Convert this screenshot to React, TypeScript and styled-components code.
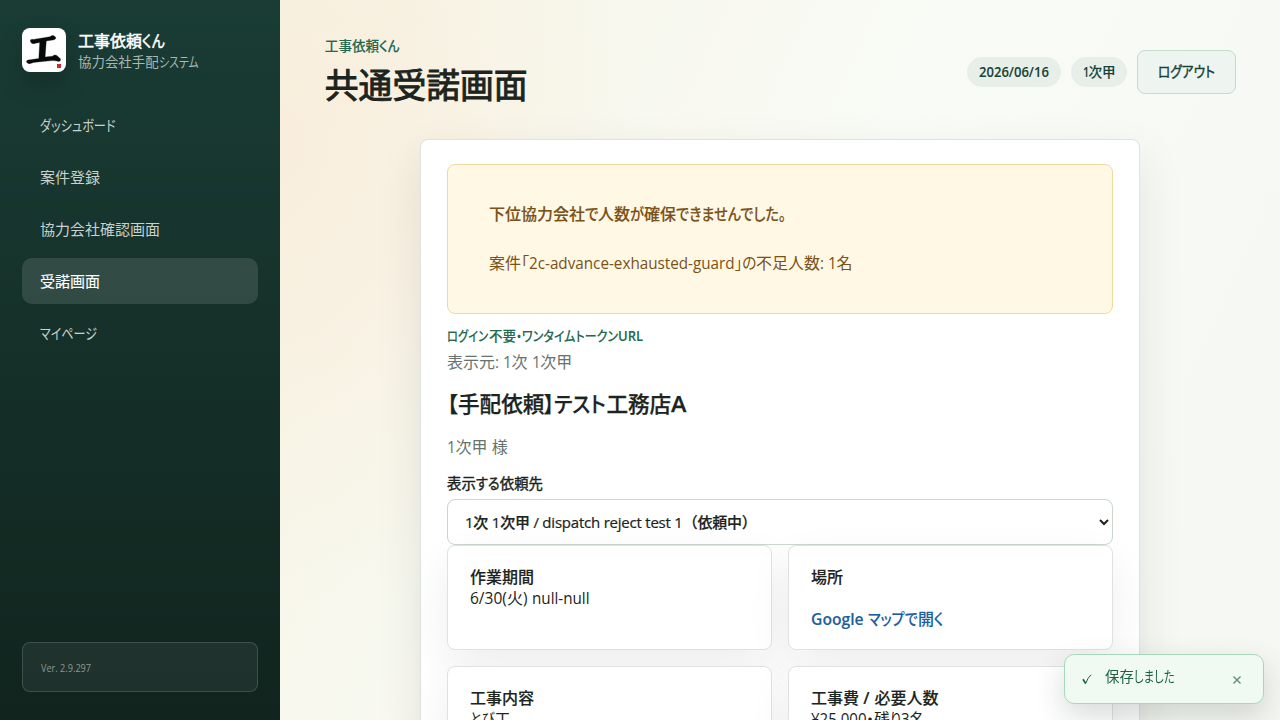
import React from 'react';
import styled, { createGlobalStyle } from 'styled-components';

const GlobalStyle = createGlobalStyle`
  * { box-sizing: border-box; }
  body {
    margin: 0;
    overflow: hidden;
    color: #1c2420;
    font-family: "Open Sans", "Noto Sans CJK JP", sans-serif;
    font-feature-settings: "palt";
  }
`;

/* A run of text set narrower than its natural width. */
const Narrow = styled.span<{ $w: number; $s: number; $semi?: boolean }>`
  display: inline-block;
  width: ${p => p.$w}px;
  white-space: pre;
  font-weight: ${p => (p.$semi ? 600 : 'inherit')};
  transform: scaleX(${p => p.$s});
  transform-origin: left;
`;

const N = ({ w, s, semi, children }: { w: number; s: number; semi?: boolean; children: React.ReactNode }) => (
  <Narrow $w={w} $s={s} $semi={semi}>{children}</Narrow>
);

const Shell = styled.div`
  display: grid;
  grid-template-columns: 280px 1fr;
  grid-template-rows: 720px;
  height: 720px;
  overflow: hidden;
`;

const Sidebar = styled.aside`
  display: flex;
  flex-direction: column;
  padding: 28px 22px;
  background: linear-gradient(180deg, #193c34 0%, #11241e 100%);
`;

const Brand = styled.div`
  display: flex;
  gap: 12px;
  height: 44px;
  margin-bottom: 30px;
`;

const Logo = styled.div`
  width: 44px;
  height: 44px;
  border-radius: 8px;
  background: #fff;
  box-shadow: 0 12px 26px rgba(0, 0, 0, 0.18);
`;

const BrandName = styled.div`
  height: 22px;
  margin-top: 2px;
  font-size: 16px;
  line-height: 22px;
  color: #fff;
  white-space: nowrap;
  -webkit-text-stroke: 0.5px currentColor;
`;

const BrandSub = styled.div`
  font-size: 13.44px;
  line-height: 20px;
  color: #a9b7b1;
  white-space: nowrap;
`;

const Nav = styled.nav`
  display: grid;
  gap: 6px;
`;

const NavItem = styled.a<{ $active?: boolean }>`
  height: 46px;
  padding: 0 18px;
  border-radius: 10px;
  font-size: 15px;
  line-height: 46px;
  white-space: nowrap;
  color: ${p => (p.$active ? '#fff' : '#c8d1cd')};
  background: ${p => (p.$active ? 'rgba(255,255,255,0.12)' : 'transparent')};
  -webkit-text-stroke: ${p => (p.$active ? '0.15px currentColor' : '0')};
`;

const Version = styled.div`
  height: 50px;
  margin-top: auto;
  padding: 0 18px;
  border: 1px solid rgba(255, 255, 255, 0.15);
  border-radius: 8px;
  background: rgba(255, 255, 255, 0.06);
  color: #8b9893;
  font-size: 10px;
  line-height: 50px;
`;

const Main = styled.main`
  min-width: 0;
  overflow: hidden;
  padding: 36px 44px 0;
  background:
    radial-gradient(360px 460px at 0 145px, rgba(252, 228, 204, 0.42), rgba(252, 228, 204, 0)),
    linear-gradient(115deg, #f6f4e5 0%, #f9fbf6 52%, #f5f7f2 100%);
`;

const Header = styled.header`
  display: flex;
  justify-content: space-between;
  align-items: center;
  height: 72px;
  margin-bottom: 31px;
`;

const Eyebrow = styled.div`
  height: 20px;
  font-size: 13.6px;
  line-height: 20px;
  font-weight: 500;
  color: #24694f;
  white-space: nowrap;
  -webkit-text-stroke: 0.1px currentColor;
`;

const Heading = styled.div`
  height: 72px;
  padding-left: 0.8px;
`;

const PageTitle = styled.h1`
  height: 44px;
  margin: 8px 0 0;
  font-size: 33.8px;
  line-height: 43px;
  font-weight: 400;
  -webkit-text-stroke: 0.95px currentColor;
`;

const Actions = styled.div`
  display: flex;
  align-items: center;
  gap: 10px;
`;

const Pill = styled.span<{ $w: number }>`
  width: ${p => p.$w}px;
  height: 30px;
  padding-left: 12px;
  border-radius: 15px;
  background: #e7efe8;
  color: #174438;
  font-size: 13.6px;
  line-height: 30px;
  font-weight: 500;
  white-space: nowrap;
  -webkit-text-stroke: 0.1px currentColor;
`;

const Button = styled.button`
  width: 99px;
  height: 44px;
  padding: 0 0 0 20px;
  border: 1px solid #c6dacd;
  border-radius: 8px;
  background: #eef4f0;
  color: #174438;
  font-family: inherit;
  font-feature-settings: inherit;
  font-size: 14.4px;
  line-height: 42px;
  text-align: left;
  -webkit-text-stroke: 0.45px currentColor;
`;

const Card = styled.section`
  width: 720px;
  height: 900px;
  margin: 0 auto;
  padding: 24px 26px;
  border: 1px solid #dde3de;
  border-radius: 8px;
  background: #fff;
  box-shadow: 0 18px 45px rgba(29, 44, 36, 0.1);
`;

const Alert = styled.div`
  height: 150px;
  margin-bottom: 12px;
  padding: 38px 41px;
  border: 1px solid #f0d9a0;
  border-radius: 8px;
  background: #fff8e4;
  color: #7a5118;
`;

const Line = styled.p<{ $bold?: boolean; $top?: number; $h?: number }>`
  height: ${p => p.$h ?? 22}px;
  margin: ${p => p.$top ?? 0}px 0 0;
  font-size: 16px;
  line-height: ${p => p.$h ?? 22}px;
  font-weight: ${p => (p.$bold ? 500 : 400)};
  white-space: nowrap;
  -webkit-text-stroke: ${p => (p.$bold ? '0.15px currentColor' : '0')};
`;

const Muted = styled(Line)`
  color: #68736d;
`;

const RequestTitle = styled.h2`
  height: 30px;
  margin: 16px 0 17px;
  font-size: 21.6px;
  line-height: 29px;
  font-weight: 500;
  white-space: nowrap;
  -webkit-text-stroke: 0.25px currentColor;
`;

const Label = styled.label`
  display: block;
  height: 20px;
  margin: 16px 0 5px;
  font-size: 14.4px;
  line-height: 20px;
  white-space: nowrap;
  -webkit-text-stroke: 0.4px currentColor;
`;

const Select = styled.select`
  display: block;
  width: 100%;
  height: 46px;
  padding: 0 0 0 13px;
  border: 1px solid #cbd6cd;
  border-radius: 8px;
  background: #fff;
  color: #1c2420;
  font-family: inherit;
  font-size: 15px;
  font-weight: 500;
  letter-spacing: -0.22px;
  -webkit-text-stroke: 0.22px currentColor;
`;

const Grid = styled.div`
  display: grid;
  grid-template-columns: 1fr 1fr;
  gap: 16px;
`;

const Info = styled.article`
  height: 105px;
  padding: 20px 22px;
  border: 1px solid #dfe3dd;
  border-radius: 8px;
  background: #fff;
  box-shadow: 0 18px 45px rgba(29, 30, 30, 0.07);
`;

const MapLink = styled.a`
  display: block;
  margin-top: 20px;
  font-size: 16px;
  line-height: 22px;
  font-weight: 500;
  color: #1c5f9e;
  white-space: nowrap;
  -webkit-text-stroke: 0.1px currentColor;
`;

const Toast = styled.div`
  position: fixed;
  right: 16px;
  bottom: 16px;
  display: flex;
  align-items: center;
  width: 200px;
  height: 50px;
  padding: 0 21px 0 16px;
  border: 1px solid #a6d9b9;
  border-radius: 10px;
  background: #f0f9f2;
  color: #1d6147;
  box-shadow: 0 12px 30px rgba(20, 40, 30, 0.17);
`;

const ToastText = styled.span`
  flex: 1;
  margin: -5px 0 0 12px;
  font-size: 14.4px;
  line-height: 20px;
  white-space: nowrap;
`;

export default function App() {
  return (
    <>
      <GlobalStyle />
      <Shell>
        <Sidebar>
          <Brand>
            <Logo>
              <svg width="44" height="44" viewBox="0 0 44 44" aria-hidden="true">
                <path d="M8.3 12q1.3-1 3-.6l16.500-2.600q2-1.500 3.700-1.200l2.200 1.600q.6 1.900-1.500 2.600l-7.900 1.200-1.200 16 7.300-.8q2.500-2.200 4.400-.7l3.600 3.200q.6 2.700-1.700 2.700-4.500-1.200-9-.6l-11.600 1.100q-5.200.4-7.700 1.600-2.700.8-3.900-1.600-.2-1.500 1.700-1.800l10.600-1.700.9-15.900-4.300.8q-2.900 1.400-4.700-1z" fill="#080a09" stroke="#080a09" strokeWidth="0.3" strokeLinejoin="round" />
                <rect x="35" y="36" width="4" height="4" fill="#d3262c" />
              </svg>
            </Logo>
            <div>
              <BrandName>工事依頼<N w={23} s={0.87}>くん</N></BrandName>
              <BrandSub>協力会社手配<N w={41} s={0.81}>システム</N></BrandSub>
            </div>
          </Brand>
          <Nav>
            <NavItem><N w={77} s={0.81}>ダッシュボード</N></NavItem>
            <NavItem>案件登録</NavItem>
            <NavItem>協力会社確認画面</NavItem>
            <NavItem $active>受諾画面</NavItem>
            <NavItem><N w={57} s={0.8}>マイページ</N></NavItem>
          </Nav>
          <Version><N w={50} s={0.915}>Ver. 2.9.297</N></Version>
        </Sidebar>
        <Main>
          <Header>
            <Heading>
              <Eyebrow>工事依頼<N w={20} s={0.93}>くん</N></Eyebrow>
              <PageTitle>共通受諾画面</PageTitle>
            </Heading>
            <Actions>
              <Pill $w={94}><N semi w={70} s={0.96}>2026/06/16</N></Pill>
              <Pill $w={56}><N semi w={5.5} s={0.8}>1</N>次甲</Pill>
              <Button><N w={58} s={0.88}>ログアウト</N></Button>
            </Actions>
          </Header>
          <Card>
            <Alert>
              <Line $bold>
                下位協力会社<N w={13} s={0.91}>で</N>人数<N w={14} s={0.89}>が</N>確保<N w={112} s={0.885}>できませんでした。</N>
              </Line>
              <Line $top={27}>
                案件<N w={8} s={1}>「</N><N w={205.5} s={0.952}>2c-advance-exhausted-guard</N><N w={21.5} s={0.92}>」の</N>不足人数<N w={16.5} s={0.95}>: 1</N>名
              </Line>
            </Alert>
            <Eyebrow>
              <N w={42} s={0.83}>ログイン</N>不要<N w={102} s={0.885}>・ワンタイムトークン</N><N semi w={25} s={0.96}>URL</N>
            </Eyebrow>
            <Muted $top={5}>表示元<N w={16.5} s={0.96}>: 1</N>次<N w={12.6} s={0.96}> 1</N>次甲</Muted>
            <RequestTitle>
              <N w={11} s={1}>【</N>手配依頼<N w={62} s={0.93}>】テスト</N>工務店<N semi w={15.6} s={1.08}>A</N>
            </RequestTitle>
            <Muted><N w={8.6} s={0.95}>1</N>次甲 様</Muted>
            <Label>表示<N w={24} s={0.91}>する</N>依頼先</Label>
            <Select defaultValue="a">
              <option value="a">1次 1次甲 / dispatch reject test 1（依頼中）</option>
            </Select>
            <Grid>
              <Info>
                <Line $bold>作業期間</Line>
                <Line $h={21}><N w={37} s={0.97}>6/30(</N>火<N w={9} s={0.95}>) </N><N w={58} s={0.95}>null-null</N></Line>
              </Info>
              <Info>
                <Line $bold>場所</Line>
                <MapLink><N semi w={57} s={0.98}>Google</N><N w={50} s={0.88}>マップで</N>開<N w={10} s={0.86}>く</N></MapLink>
              </Info>
              <Info>
                <Line $bold>工事内容</Line>
                <Line $h={21}><N w={24.5} s={0.83}>とび</N>工</Line>
              </Info>
              <Info>
                <Line $bold>工事費<N semi w={15.5} s={1}> / </N>必要人数</Line>
                <Line $h={21}><N w={55} s={0.94}>¥25,000</N><N w={8} s={1}>・</N>残<N w={11} s={0.83}>り</N><N w={8.6} s={0.94}>3</N>名</Line>
              </Info>
            </Grid>
          </Card>
        </Main>
      </Shell>
      <Toast>
        <svg width="12" height="14" viewBox="0 0 12 14" fill="none" stroke="currentColor" aria-hidden="true">
          <path d="M2 7.2L4.7 11.5" strokeWidth="1.7" />
          <path d="M4.7 11.5Q6.8 5.5 10 2.8" strokeWidth="1" />
        </svg>
        <ToastText>保存<N w={41} s={0.79}>しました</N></ToastText>
        <svg width="10" height="10" viewBox="0 0 10 10" fill="none" stroke="#5c8c79" strokeWidth="1.3" aria-hidden="true">
          <path d="M1.5 2.500L8.500 9.500M8.500 2.500L1.500 9.500" />
        </svg>
      </Toast>
    </>
  );
}
